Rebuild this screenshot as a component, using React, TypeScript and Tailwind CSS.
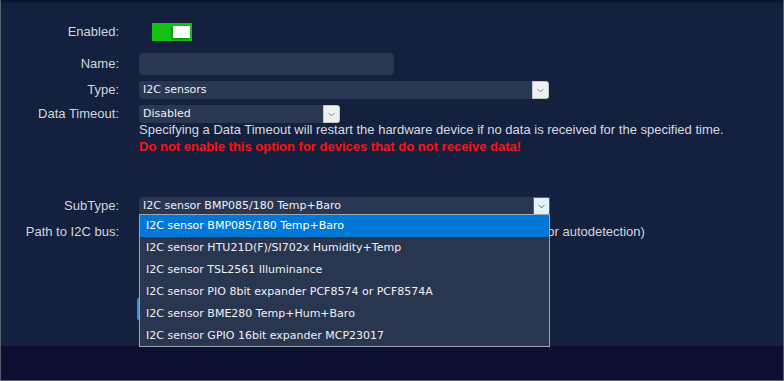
import { ChevronDown } from 'lucide-react';

const subTypes = [
  'I2C sensor BMP085/180 Temp+Baro',
  'I2C sensor HTU21D(F)/SI702x Humidity+Temp',
  'I2C sensor TSL2561 Illuminance',
  'I2C sensor PIO 8bit expander PCF8574 or PCF8574A',
  'I2C sensor BME280 Temp+Hum+Baro',
  'I2C sensor GPIO 16bit expander MCP23017',
];

function Label({ children }: { children: React.ReactNode }) {
  return (
    <div className="w-[119px] shrink-0 text-right text-[13px] leading-[18px] text-[#d4d6dc] pr-px">
      {children}
    </div>
  );
}

function SelectBox({
  value,
  width,
  focused = false,
}: {
  value: string;
  width: string;
  focused?: boolean;
}) {
  return (
    <div className={`${width} h-[18px] flex items-stretch bg-[#293752] rounded-l-[3px]`}>
      <div className="flex-1 pl-[4px] flex items-center text-[11px] text-[#eef0f4] font-['DejaVu_Sans',sans-serif]">
        {value}
      </div>
      {focused ? (
        <div className="w-[17px] flex items-center justify-center bg-[#e5f1fb] border border-[#0078d7] rounded-r-[2px]">
          <ChevronDown size={11} strokeWidth={1.5} className="text-[#333]" />
        </div>
      ) : (
        <div className="w-[17px] flex items-center justify-center bg-[#f0f0f0] border border-[#c8c8c8] rounded-r-[3px]">
          <ChevronDown size={11} strokeWidth={1.5} className="text-[#555]" />
        </div>
      )}
    </div>
  );
}

export default function App() {
  return (
    <div className="w-[784px] h-[381px] bg-[#0b1030] font-['Liberation_Sans',Arial,sans-serif] border-l border-r border-b border-[#5a6070] flex flex-col overflow-hidden">
      <div className="h-[3px] bg-[#0c1733]" />
      <div className="relative h-[343px] bg-[#13203e] pt-[20px]">
        {/* Enabled */}
        <div className="flex items-center h-[18px]">
          <Label>Enabled:</Label>
          <div className="ml-[32px] w-[40px] h-[18px] bg-[#15c015] flex items-center justify-end pr-[2px]">
            <div className="w-[17px] h-[12px] bg-white shadow-[-1px_1px_2px_rgba(0,80,0,0.6)]" />
          </div>
        </div>

        {/* Name */}
        <div className="flex items-center mt-[12px]">
          <Label>Name:</Label>
          <div className="ml-[19px] w-[255px] h-[22px] rounded-[4px] bg-[#293752]" />
        </div>

        {/* Type */}
        <div className="flex items-center mt-[6px]">
          <Label>Type:</Label>
          <div className="ml-[19px]">
            <SelectBox value="I2C sensors" width="w-[410px]" />
          </div>
        </div>

        {/* Data Timeout */}
        <div className="flex items-start mt-[6px]">
          <Label>Data Timeout:</Label>
          <div className="ml-[19px] flex flex-col">
            <SelectBox value="Disabled" width="w-[201px]" />
            <div className="text-[13px] leading-[17px] text-[#d8dae0] -mt-[2px]">
              Specifying a Data Timeout will restart the hardware device if no data is received for the specified time.
            </div>
            <div className="text-[13px] leading-[17px] font-bold text-[#ff1010]">
              Do not enable this option for devices that do not receive data!
            </div>
          </div>
        </div>

        {/* SubType */}
        <div className="flex items-center mt-[42px]">
          <Label>SubType:</Label>
          <div className="ml-[19px]">
            <SelectBox value={subTypes[0]} width="w-[411px]" focused />
          </div>
        </div>

        {/* Path to I2C bus */}
        <div className="flex items-center h-[20px] mt-[7px]">
          <Label>Path to I2C bus:</Label>
          <div className="ml-[19px] flex items-center">
            <div className="w-[200px] h-[20px] rounded-[4px] bg-[#293752]" />
            <span className="ml-[131px] text-[13px] text-[#d4d6dc]">(leave blank for autodetection)</span>
          </div>
        </div>

        {/* Button behind dropdown */}
        <div className="ml-[136px] mt-[55px] w-[80px] h-[24px] rounded-[4px] bg-[#3c8ed4]" />

        {/* Open dropdown list */}
        <div className="absolute left-[138px] top-[211px] w-[411px] h-[133px] bg-[#293650] border border-[#a0a4ac] flex flex-col">
          {subTypes.map((s, i) => (
            <div
              key={s}
              className={`h-[22px] shrink-0 flex items-center pl-[6px] text-[11px] font-['DejaVu_Sans',sans-serif] ${
                i === 0 ? 'bg-[#0078d7] text-white' : 'text-[#eef0f4]'
              }`}
            >
              {s}
            </div>
          ))}
        </div>
      </div>
      <div className="flex-1 bg-[#0b1030]" />
    </div>
  );
}
